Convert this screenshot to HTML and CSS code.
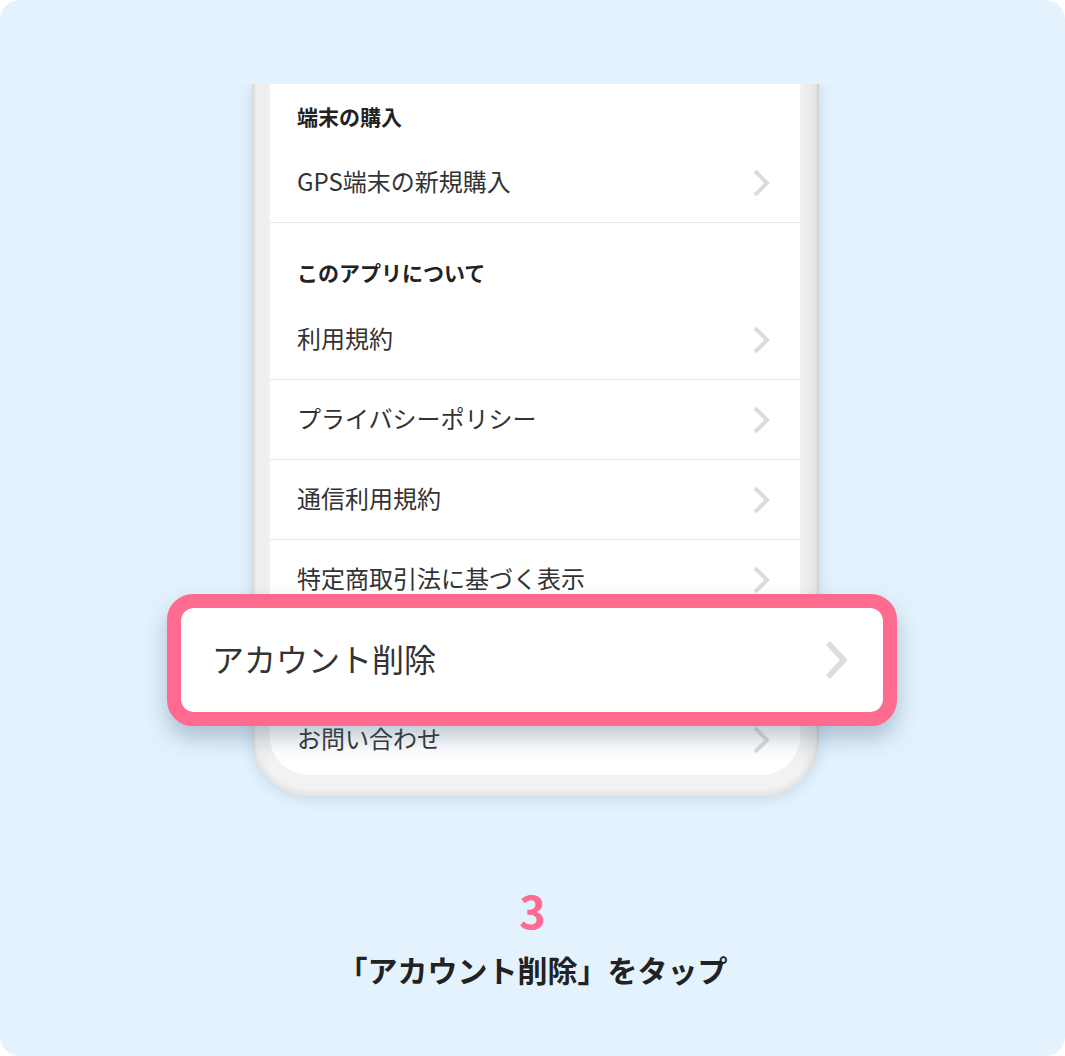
FILE: index.html
```html
<!DOCTYPE html>
<html lang="ja">
<head>
<meta charset="utf-8">
<title>アカウント削除</title>
<link rel="stylesheet" href="styles.css">
</head>
<body>
<div class="card">
  <div class="stage">
    <div class="phone-clip">
      <div class="phone">
        <div class="screen">
          <div class="section-head first">端末の購入</div>
          <div class="row"><span>GPS端末の新規購入</span><svg class="chev" viewBox="0 0 17 28"><polyline points="2,2 14,14 2,26"/></svg></div>
          <div class="section-head">このアプリについて</div>
          <div class="row"><span>利用規約</span><svg class="chev" viewBox="0 0 17 28"><polyline points="2,2 14,14 2,26"/></svg></div>
          <div class="row"><span>プライバシーポリシー</span><svg class="chev" viewBox="0 0 17 28"><polyline points="2,2 14,14 2,26"/></svg></div>
          <div class="row"><span>通信利用規約</span><svg class="chev" viewBox="0 0 17 28"><polyline points="2,2 14,14 2,26"/></svg></div>
          <div class="row"><span>特定商取引法に基づく表示</span><svg class="chev" viewBox="0 0 17 28"><polyline points="2,2 14,14 2,26"/></svg></div>
          <div class="row covered"><span>アカウント削除</span><svg class="chev" viewBox="0 0 17 28"><polyline points="2,2 14,14 2,26"/></svg></div>
          <div class="row"><span>お問い合わせ</span><svg class="chev" viewBox="0 0 17 28"><polyline points="2,2 14,14 2,26"/></svg></div>
        </div>
      </div>
    </div>
    <div class="highlight">
      <div class="highlight-inner">
        <span>アカウント削除</span>
        <svg class="chev-big" viewBox="0 0 23 40"><polyline points="3,3 19,20 3,37"/></svg>
      </div>
    </div>
  </div>
  <div class="step-num">3</div>
  <div class="step-text">「アカウント削除」をタップ</div>
</div>
</body>
</html>
```

FILE: styles.css
```css
html, body {
  margin: 0;
  padding: 0;
  background: #ffffff;
}

body {
  font-family: "Noto Sans CJK JP", "Noto Sans", sans-serif;
}

.card {
  width: 1065px;
  height: 1056px;
  box-sizing: border-box;
  border-radius: 20px;
  background: #e3f2fd;
  padding-top: 84px;
  display: flex;
  flex-direction: column;
  align-items: center;
  overflow: hidden;
}

.stage {
  position: relative;
  align-self: flex-start;
  margin-left: 212px;
}

.phone-clip {
  overflow: hidden;
  padding: 0 40px 40px 40px;
}

.phone {
  width: 567px;
  box-sizing: border-box;
  padding: 0 19px 21px 18px;
  background: linear-gradient(to right, #dedede 0px, #eeeeee 5px, #efefef 14px, #f2f2f2 18px, #f2f2f2 calc(100% - 19px), #eeeeee calc(100% - 14px), #e6e6e6 calc(100% - 4px), #d6d6d6 100%);
  border-radius: 0 0 58px 58px;
  box-shadow: 0 2px 14px rgba(90, 110, 130, 0.22), inset 0 -4px 5px rgba(0, 0, 0, 0.06);
}

.screen {
  height: 691px;
  background: #ffffff;
  border-radius: 0 0 38px 38px;
  overflow: hidden;
}

.section-head {
  height: 77px;
  box-sizing: border-box;
  display: flex;
  align-items: flex-end;
  padding: 0 27px 13px 27px;
  font-size: 21px;
  line-height: 30px;
  font-weight: 700;
  color: #222222;
}

.section-head.first {
  height: 59px;
  padding-bottom: 12px;
}

.row {
  height: 80px;
  box-sizing: border-box;
  border-bottom: 1px solid #e8e8e8;
  display: flex;
  align-items: center;
  justify-content: space-between;
  padding: 0 30px 0 27px;
  font-size: 24px;
  color: #333333;
}

.row span {
  line-height: 30px;
  padding-bottom: 3px;
}

.row.covered span {
  visibility: hidden;
}

.chev {
  width: 17px;
  height: 28px;
  flex: none;
}

.chev polyline {
  fill: none;
  stroke: #dcdcdc;
  stroke-width: 4;
}

.highlight {
  position: absolute;
  left: -45px;
  top: 510px;
  width: 730px;
  height: 132px;
  box-sizing: border-box;
  border: 14px solid #fe6b8f;
  border-radius: 26px;
  background: #fe6b8f;
  box-shadow: 0 12px 22px rgba(70, 100, 130, 0.35);
}

.highlight-inner {
  height: 100%;
  box-sizing: border-box;
  background: #ffffff;
  border-radius: 13px;
  display: flex;
  align-items: center;
  justify-content: space-between;
  padding: 0 35px 0 31px;
  font-size: 32px;
  color: #333333;
}

.highlight-inner span {
  padding-bottom: 4px;
}

.chev-big {
  width: 23px;
  height: 40px;
  flex: none;
}

.chev-big polyline {
  fill: none;
  stroke: #dcdcdc;
  stroke-width: 5.5;
}

.step-num {
  margin-top: 51px;
  font-size: 45px;
  line-height: 45px;
  font-weight: 700;
  color: #fe6b8f;
}

.step-text {
  margin-top: 16px;
  font-size: 30px;
  line-height: 42px;
  font-weight: 700;
  color: #222222;
}
```
